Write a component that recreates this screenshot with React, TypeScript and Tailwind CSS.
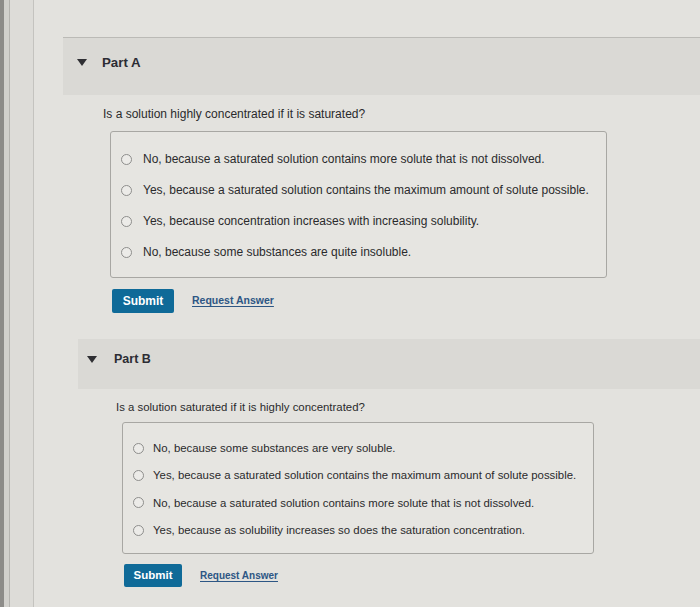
type PartProps = {
  title: string;
  question: string;
  options: string[];
};

const partA: PartProps = {
  title: 'Part A',
  question: 'Is a solution highly concentrated if it is saturated?',
  options: [
    'No, because a saturated solution contains more solute that is not dissolved.',
    'Yes, because a saturated solution contains the maximum amount of solute possible.',
    'Yes, because concentration increases with increasing solubility.',
    'No, because some substances are quite insoluble.',
  ],
};

const partB: PartProps = {
  title: 'Part B',
  question: 'Is a solution saturated if it is highly concentrated?',
  options: [
    'No, because some substances are very soluble.',
    'Yes, because a saturated solution contains the maximum amount of solute possible.',
    'No, because a saturated solution contains more solute that is not dissolved.',
    'Yes, because as solubility increases so does the saturation concentration.',
  ],
};

function Caret() {
  return (
    <svg width="10" height="7" viewBox="0 0 10 7" className="shrink-0">
      <path d="M0 0 L10 0 L5 7 Z" fill="#2f2f33" />
    </svg>
  );
}

function Radio() {
  return <span className="block w-[11px] h-[11px] rounded-full border-[1.5px] border-[#8e8e8c] bg-[#ecebe8] shrink-0" />;
}

export default function App() {
  return (
    <div
      className="w-[700px] h-[607px] overflow-hidden flex bg-[#e3e2de] text-[#2a2a2c]"
      style={{ fontFamily: '"Liberation Sans", Arial, sans-serif' }}>
      {/* left edge of the monitor / gutter */}
      <div className="w-[4px] bg-[#8d8c89]" />
      <div className="w-[6px] bg-[#d2d1cd] border-r border-[#b5b4b0]" />
      <div className="w-[24px] bg-[#dddcd8] border-r border-[#c4c3bf]" />

      <div className="flex-1 flex flex-col pt-[37px]">
        {/* Part A */}
        <div className="ml-[29px] border-t border-[#bbbab6]">
          <div className="h-[57px] bg-[#dad9d5] flex items-start gap-[15px] pl-[14px] pt-[21px]">
            <Caret />
            <span className="text-[13.3px] leading-[16px] font-semibold text-[#2c2c34] -mt-[4px]">{partA.title}</span>
          </div>
        </div>
        <div className="ml-[69px] mt-[10px] text-[12px]">{partA.question}</div>
        <div className="ml-[76px] mr-[93px] mt-[8px] h-[147px] border border-[#a8a7a3] rounded-[3px] bg-[#e6e5e1] flex flex-col gap-[16px] pt-[20px] pl-[10px]">
          {partA.options.map(o => (
            <label key={o} className="flex items-center gap-[11px] text-[12px] leading-[15px]">
              <Radio />
              <span>{o}</span>
            </label>
          ))}
        </div>
        <div className="ml-[78px] mt-[11px] flex items-center gap-[18px]">
          <button className="w-[62px] h-[24px] rounded-[2px] bg-[#0f6a98] text-white text-[12px] font-bold">
            Submit
          </button>
          <a href="#" className="text-[10.5px] font-bold text-[#2d5684] underline underline-offset-2">
            Request Answer
          </a>
        </div>

        {/* Part B */}
        <div className="ml-[44px] mt-[26px]">
          <div className="h-[50px] bg-[#dad9d5] flex items-start gap-[17px] pl-[9px] pt-[17px]">
            <Caret />
            <span className="text-[12.5px] leading-[15px] font-semibold text-[#2c2c34] -mt-[4px]">{partB.title}</span>
          </div>
        </div>
        <div className="ml-[82px] mt-[10px] text-[11.4px]">{partB.question}</div>
        <div className="ml-[88px] mr-[106px] mt-[6px] h-[132px] border border-[#a8a7a3] rounded-[3px] bg-[#e6e5e1] flex flex-col gap-[13.3px] pt-[18px] pl-[10px]">
          {partB.options.map(o => (
            <label key={o} className="flex items-center gap-[9px] text-[11.4px] leading-[14px]">
              <Radio />
              <span>{o}</span>
            </label>
          ))}
        </div>
        <div className="ml-[90px] mt-[10px] flex items-center gap-[18px]">
          <button className="w-[58px] h-[23px] rounded-[2px] bg-[#0f6a98] text-white text-[11.5px] font-bold">
            Submit
          </button>
          <a href="#" className="text-[10px] font-bold text-[#2d5684] underline underline-offset-2">
            Request Answer
          </a>
        </div>
      </div>
    </div>
  );
}
